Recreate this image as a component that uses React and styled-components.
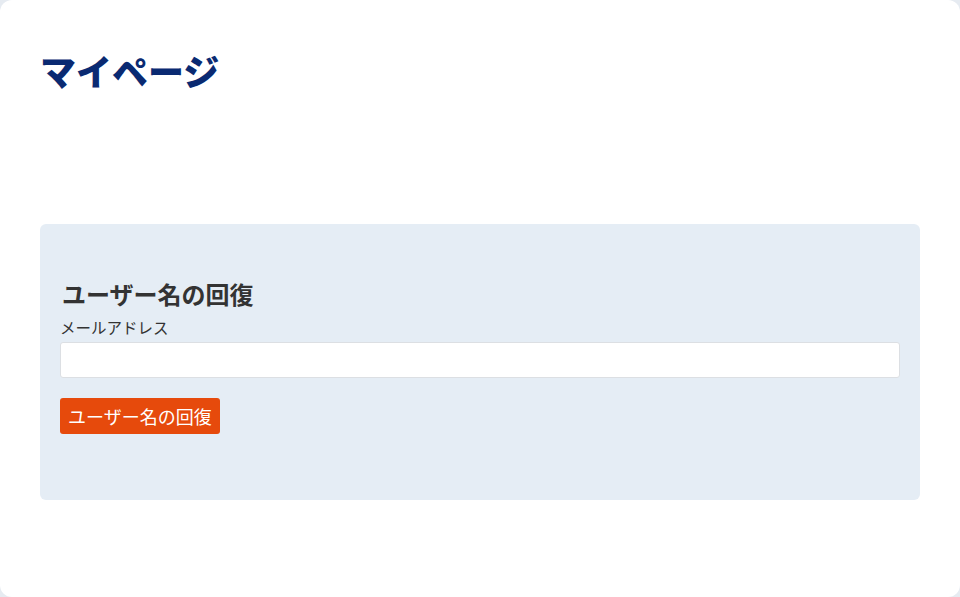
import React from "react";
import styled, { createGlobalStyle } from "styled-components";

const Global = createGlobalStyle`
  html, body { margin: 0; padding: 0; background: #e6ebf1; }
  body { font-family: "Noto Sans CJK JP", "Noto Sans", sans-serif; }
  * { box-sizing: border-box; }
`;

const Page = styled.div`
  width: 960px;
  height: 597px;
  background: #ffffff;
  border-radius: 12px;
  padding: 48px 40px 0;
  overflow: hidden;
`;

const Title = styled.h1`
  margin: 0;
  font-size: 36px;
  line-height: 44px;
  font-weight: 900;
  color: #0a2a72;
`;

const Panel = styled.section`
  margin-top: 132px;
  background: #e5edf5;
  border-radius: 6px;
  padding: 55px 20px 66px;
  display: flex;
  flex-direction: column;
  align-items: flex-start;
`;

const Heading = styled.h2`
  margin: 0 0 8px 2px;
  font-size: 24px;
  line-height: 30px;
  font-weight: 700;
  color: #333333;
`;

const Label = styled.label`
  font-size: 15.5px;
  line-height: 21px;
  color: #333333;
  margin-bottom: 4px;
`;

const Input = styled.input`
  width: 100%;
  height: 36px;
  border: 1px solid #dcdfe3;
  border-radius: 3px;
  background: #ffffff;
  padding: 0 10px;
  font-family: inherit;
  font-size: 15px;
  outline: none;
`;

const Button = styled.button`
  margin-top: 20px;
  height: 36px;
  padding: 0 8px;
  background: #e64a0c;
  color: #ffffff;
  border: none;
  border-radius: 3px;
  font-family: inherit;
  font-size: 18px;
  line-height: 36px;
  cursor: pointer;
`;

export default function App() {
  return (
    <>
      <Global />
      <Page>
        <Title>マイページ</Title>
        <Panel>
          <Heading>ユーザー名の回復</Heading>
          <Label htmlFor="email">メールアドレス</Label>
          <Input id="email" type="email" />
          <Button type="button">ユーザー名の回復</Button>
        </Panel>
      </Page>
    </>
  );
}
